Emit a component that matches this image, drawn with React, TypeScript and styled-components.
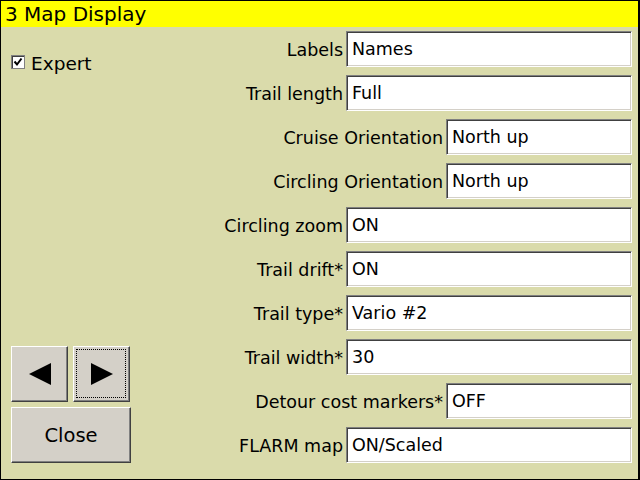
import React from "react";
import styled, { createGlobalStyle } from "styled-components";

const GlobalStyle = createGlobalStyle`
  html, body { margin: 0; padding: 0; background: #000; }
  body { font-family: "DejaVu Sans", "Liberation Sans", sans-serif; }
`;

const Frame = styled.div`
  width: 640px;
  height: 480px;
  box-sizing: border-box;
  border-style: solid;
  border-color: #000;
  border-width: 1px 2px 1px 1px;
  background: #dadbab;
  display: flex;
  flex-direction: column;
  color: #000;
`;

const TitleBar = styled.div`
  height: 26px;
  line-height: 27px;
  background: #ffff00;
  font-size: 20px;
  padding-left: 4px;
  white-space: nowrap;
`;

const Body = styled.div`
  flex: 1;
  display: flex;
  min-height: 0;
`;

const LeftPane = styled.div`
  width: 135px;
  box-sizing: border-box;
  padding: 28px 0 16px 10px;
  display: flex;
  flex-direction: column;
  justify-content: space-between;
`;

const CheckRow = styled.label`
  display: flex;
  align-items: flex-start;
  gap: 6px;
  height: 20px;
`;

const CheckText = styled.span`
  font-size: 18.5px;
  line-height: 21px;
  margin-top: -2px;
`;

const CheckBox = styled.span`
  width: 14px;
  height: 14px;
  box-sizing: border-box;
  background: #fff;
  border: 1px solid #808080;
  box-shadow: inset 1px 1px 0 #404040;
  display: flex;
  align-items: center;
  justify-content: center;
`;

const ButtonGroup = styled.div`
  display: flex;
  flex-direction: column;
  gap: 5px;
  width: 120px;
`;

const ArrowRow = styled.div`
  display: flex;
  gap: 5px;
`;

const Button = styled.div<{ $focused?: boolean; $wide?: boolean }>`
  position: relative;
  width: ${(p) => (p.$wide ? "120px" : "57px")};
  height: 56px;
  box-sizing: border-box;
  background: #d4d0c8;
  border: 1px solid;
  border-color: #fff #404040 #404040 #fff;
  box-shadow: inset -1px -1px 0 #808080;
  display: flex;
  align-items: center;
  justify-content: center;
  font-size: 19.5px;
  &::after {
    content: "";
    display: ${(p) => (p.$focused ? "block" : "none")};
    position: absolute;
    inset: 2px 3px 3px 2px;
    border: 1px dotted #000;
  }
`;

const RightPane = styled.div`
  flex: 1;
  box-sizing: border-box;
  padding: 4px 6px 16px 0;
  display: flex;
  flex-direction: column;
  gap: 8px;
`;

const Row = styled.div`
  display: flex;
  align-items: center;
  height: 36px;
  gap: 3px;
`;

const Label = styled.div<{ $wide?: boolean }>`
  flex: 0 0 ${(p) => (p.$wide ? "307px" : "207px")};
  text-align: right;
  font-size: 17.5px;
  white-space: nowrap;
  padding-top: 1px;
`;

const ValueBox = styled.div`
  flex: 1;
  height: 36px;
  box-sizing: border-box;
  background: #fff;
  border: 1px solid;
  border-color: #808080 #fff #fff #808080;
  box-shadow: inset 1px 1px 0 #404040, inset -1px -1px 0 #d4d0c8;
  padding-left: 5px;
  display: flex;
  align-items: center;
  font-size: 17.5px;
  white-space: nowrap;
`;

const rows: { label: string; value: string; wide?: boolean }[] = [
  { label: "Labels", value: "Names" },
  { label: "Trail length", value: "Full" },
  { label: "Cruise Orientation", value: "North up", wide: true },
  { label: "Circling Orientation", value: "North up", wide: true },
  { label: "Circling zoom", value: "ON" },
  { label: "Trail drift*", value: "ON" },
  { label: "Trail type*", value: "Vario #2" },
  { label: "Trail width*", value: "30" },
  { label: "Detour cost markers*", value: "OFF", wide: true },
  { label: "FLARM map", value: "ON/Scaled" },
];

const Tri = ({ dir }: { dir: "left" | "right" }) => (
  <svg width="22" height="22" viewBox="0 0 22 22">
    {dir === "left" ? (
      <polygon points="0,11 22,0 22,22" fill="#000" />
    ) : (
      <polygon points="22,11 0,0 0,22" fill="#000" />
    )}
  </svg>
);

export default function App() {
  return (
    <>
      <GlobalStyle />
      <Frame>
        <TitleBar>3 Map Display</TitleBar>
        <Body>
          <LeftPane>
            <CheckRow>
              <CheckBox>
                <svg width="10" height="10" viewBox="0 0 10 10">
                  <polyline points="1.5,4.5 4,7.5 8.5,1.5" fill="none" stroke="#000" strokeWidth="2" />
                </svg>
              </CheckBox>
              <CheckText>Expert</CheckText>
            </CheckRow>
            <ButtonGroup>
              <ArrowRow>
                <Button>
                  <Tri dir="left" />
                </Button>
                <Button $focused>
                  <Tri dir="right" />
                </Button>
              </ArrowRow>
              <Button $wide>Close</Button>
            </ButtonGroup>
          </LeftPane>
          <RightPane>
            {rows.map((r) => (
              <Row key={r.label}>
                <Label $wide={r.wide}>{r.label}</Label>
                <ValueBox>{r.value}</ValueBox>
              </Row>
            ))}
          </RightPane>
        </Body>
      </Frame>
    </>
  );
}
